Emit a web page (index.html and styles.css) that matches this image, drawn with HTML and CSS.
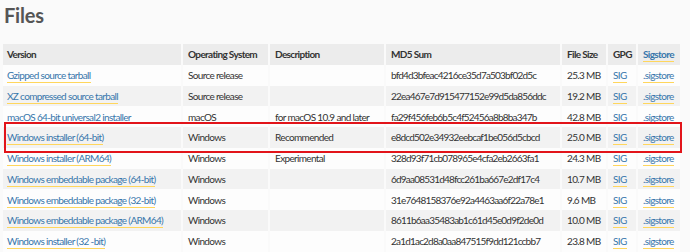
FILE: index.html
```html
<!DOCTYPE html>
<html lang="en">
<head>
  <meta charset="UTF-8">
  <title>Files</title>
  <link rel="stylesheet" href="styles.css">
</head>
<body>
  <h2 class="title">Files</h2>
  <div class="files-wrap">
    <table class="files">
      <thead>
        <tr>
          <th class="col-version">Version</th>
          <th class="col-os">Operating System</th>
          <th class="col-desc">Description</th>
          <th class="col-md5">MD5 Sum</th>
          <th class="col-size">File Size</th>
          <th class="col-gpg">GPG</th>
          <th class="col-sig"><a href="#">Sigstore</a></th>
        </tr>
      </thead>
      <tbody>
        <tr>
          <td><a href="#">Gzipped source tarball</a></td>
          <td>Source release</td>
          <td></td>
          <td class="sum">bfd4d3bfeac4216ce35d7a503bf02d5c</td>
          <td>25.3 MB</td>
          <td><a href="#">SIG</a></td>
          <td><a href="#">.sigstore</a></td>
        </tr>
        <tr>
          <td><a href="#">XZ compressed source tarball</a></td>
          <td>Source release</td>
          <td></td>
          <td class="sum">22ea467e7d915477152e99d5da856ddc</td>
          <td>19.2 MB</td>
          <td><a href="#">SIG</a></td>
          <td><a href="#">.sigstore</a></td>
        </tr>
        <tr>
          <td><a href="#" class="plain">macOS 64-bit universal2 installer</a></td>
          <td>macOS</td>
          <td>for macOS 10.9 and later</td>
          <td class="sum">fa29f456feb6b5c4f52456a8b8ba347b</td>
          <td>42.8 MB</td>
          <td><a href="#" class="plain">SIG</a></td>
          <td><a href="#" class="plain">.sigstore</a></td>
        </tr>
        <tr class="picked">
          <td><a href="#">Windows installer (64-bit)</a></td>
          <td>Windows</td>
          <td>Recommended</td>
          <td class="sum">e8dcd502e34932eebcaf1be056d5cbcd</td>
          <td>25.0 MB</td>
          <td><a href="#">SIG</a></td>
          <td><a href="#">.sigstore</a></td>
        </tr>
        <tr>
          <td><a href="#">Windows installer (ARM64)</a></td>
          <td>Windows</td>
          <td>Experimental</td>
          <td class="sum">328d93f71cb078965e4cfa2eb2663fa1</td>
          <td>24.3 MB</td>
          <td><a href="#">SIG</a></td>
          <td><a href="#">.sigstore</a></td>
        </tr>
        <tr>
          <td><a href="#">Windows embeddable package (64-bit)</a></td>
          <td>Windows</td>
          <td></td>
          <td class="sum">6d9aa08531d48fcc261ba667e2df17c4</td>
          <td>10.7 MB</td>
          <td><a href="#">SIG</a></td>
          <td><a href="#">.sigstore</a></td>
        </tr>
        <tr>
          <td><a href="#">Windows embeddable package (32-bit)</a></td>
          <td>Windows</td>
          <td></td>
          <td class="sum">31e7648158376e92a4463aa6f22a78e1</td>
          <td>9.6 MB</td>
          <td><a href="#">SIG</a></td>
          <td><a href="#">.sigstore</a></td>
        </tr>
        <tr>
          <td><a href="#">Windows embeddable package (ARM64)</a></td>
          <td>Windows</td>
          <td></td>
          <td class="sum">8611b6aa35483ab1c61d45e0d9f2de0d</td>
          <td>10.0 MB</td>
          <td><a href="#">SIG</a></td>
          <td><a href="#">.sigstore</a></td>
        </tr>
        <tr>
          <td><a href="#">Windows installer (32 -bit)</a></td>
          <td>Windows</td>
          <td></td>
          <td class="sum">2a1d1ac2d8a0aa847515f9dd121ccbb7</td>
          <td>23.8 MB</td>
          <td><a href="#">SIG</a></td>
          <td><a href="#">.sigstore</a></td>
        </tr>
      </tbody>
    </table>
    <div class="mark"></div>
  </div>
</body>
</html>
```

FILE: styles.css
```css
* {
  margin: 0;
  padding: 0;
  box-sizing: border-box;
}
body {
  font-family: Lato, 'Liberation Sans', sans-serif;
  font-size: 10px;
  letter-spacing: -0.65px;
  color: #333;
  background: #fafafa;
  padding: 0 10px 0 3px;
}
.title {
  font-size: 20px;
  font-weight: 700;
  letter-spacing: -0.2px;
  color: #555;
  line-height: 28px;
  padding: 1px 0 0 1px;
  height: 44px;
}
.files-wrap {
  position: relative;
}
.files {
  width: 677px;
  border-collapse: collapse;
  table-layout: fixed;
}
.files th,
.files td {
  height: 20.75px;
  padding: 0 4px 0 5px;
  text-align: left;
  white-space: nowrap;
  border-right: 2px solid #fafafa;
  vertical-align: middle;
}
.files th:last-child,
.files td:last-child { border-right: none; }
.files td:first-child,
.files th:first-child { padding-left: 4px; }
.files thead tr { background: #ececec; }
.files th { font-weight: 700; color: #333; }
.files tbody tr:nth-child(odd) { background: #fdfdfd; }
.files tbody tr:nth-child(even) { background: #f2f2f2; }
.files td.sum { letter-spacing: -0.8px; }
.col-version { width: 179px; }
.col-os { width: 87px; }
.col-desc { width: 116px; }
.col-md5 { width: 176px; }
.col-size { width: 46px; }
.col-gpg { width: 30px; }
.col-sig { width: 43px; }
.files a {
  color: #3776ab;
  text-decoration: none;
  border-bottom: 1px solid #ffd65c;
  padding-bottom: 1px;
}
.files a.plain { border-bottom-color: transparent; }
.mark {
  position: absolute;
  left: 1px;
  top: 78px;
  width: 678px;
  height: 31px;
  border: 2px solid #e2141a;
  pointer-events: none;
}
```
